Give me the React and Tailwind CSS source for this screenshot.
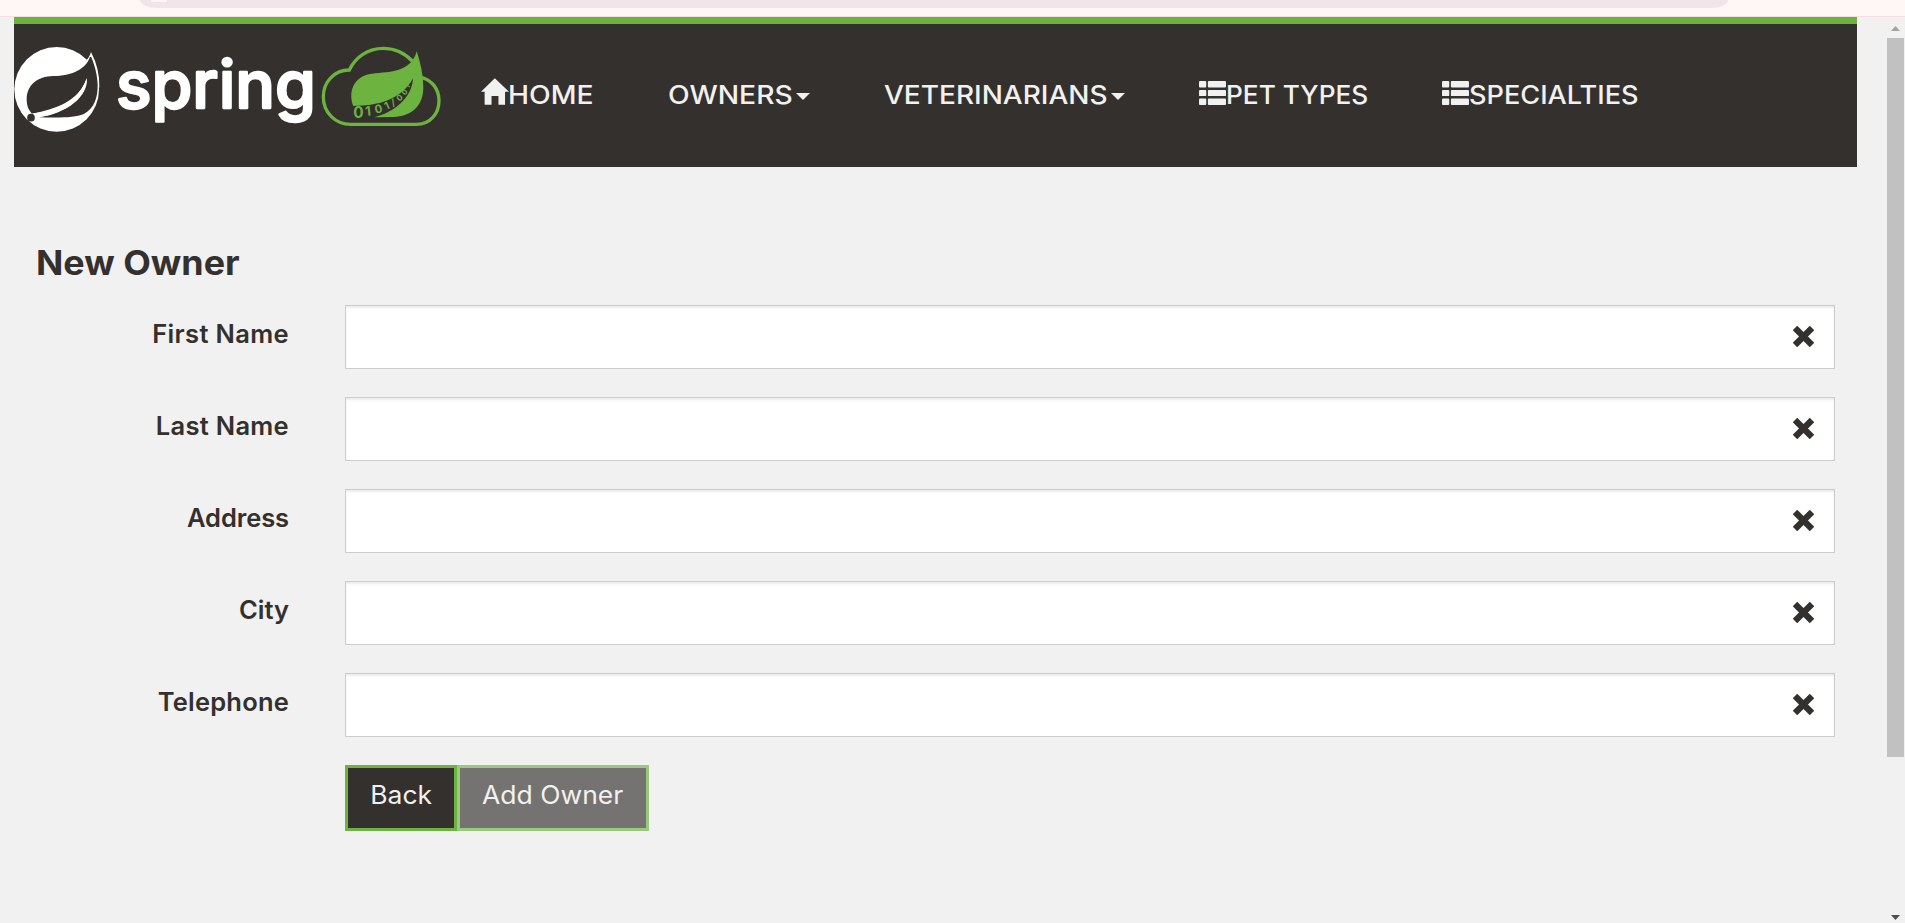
import React from "react";

function SpringLogo() {
  return (
    <svg viewBox="42 135 1290 264" className="h-[88px] w-[430px] shrink-0 overflow-visible" aria-label="Spring">
      <circle cx="170" cy="268" r="127" fill="#fff" />
      <path d="M250 190Q268 176 273 156Q300 208 298 262L270 290Z" fill="#fff" />
      <path
        d="M270 170C258 208 215 227 160 228C112 229 80 255 80 298C80 318 86 331 96 341C170 332 235 305 260 235C266 290 200 340 118 352C180 354 226 353 250 343C285 325 293 290 293 255C292 225 284 195 274 172Z"
        fill="#34302d"
      />
      <path d="M96 341C170 328 240 300 260 235C264 290 195 342 116 351Z" fill="#fff" />
      <circle cx="93" cy="353" r="11.5" fill="#34302d" />
      <text
        x="348"
        y="323"
        textLength="600"
        lengthAdjust="spacingAndGlyphs"
        fill="#fff"
        stroke="#fff"
        strokeWidth="7"
        strokeLinejoin="round"
        className="font-['Inter',sans-serif] text-[196px] font-medium"
      >
        spring
      </text>
      <path
        d="M1240 186C1216 160 1184 145 1150 145C1104 145 1066 171 1048 210C1003 210 970 246 970 290C970 337 1005 373 1052 373H1250C1290 373 1317 341 1317 302C1317 268 1297 241 1264 232"
        fill="none"
        stroke="#6db33f"
        strokeWidth="10"
      />
      <path
        d="M1250 154C1262 190 1270 225 1270 262C1270 320 1232 350 1180 351L1122 352C1180 338 1236 296 1239 235C1205 300 1130 318 1060 318C1046 282 1056 240 1098 225C1140 212 1230 230 1250 154Z"
        fill="#6db33f"
      />
      <g fill="#6db33f" className="font-['Inter',sans-serif] font-bold">
        <text x="1060" y="355" className="text-[46px]">0</text>
        <text transform="translate(1097 348) rotate(-6)" className="text-[39px]">1</text>
        <text transform="translate(1127 341) rotate(-14)" className="text-[34px]">0</text>
        <text transform="translate(1159 330) rotate(-24)" className="text-[31px]">1</text>
        <text transform="translate(1178 319) rotate(-24)" className="text-[28px]">/</text>
        <text transform="translate(1197 305) rotate(-36)" className="text-[25px]">0</text>
        <text transform="translate(1214 287) rotate(-46)" className="text-[22px]">0</text>
        <text transform="translate(1227 266) rotate(-58)" className="text-[19px]">1</text>
      </g>
    </svg>
  );
}

function HomeIcon() {
  return (
    <svg viewBox="64 84 85 81" className="mt-[-2px] h-[27px] w-[28px] shrink-0" fill="#f1f1f1">
      <path d="M106 84L149 125H137V165H117V138H96V165H75V125H64Z" />
    </svg>
  );
}

function ListIcon() {
  return (
    <svg viewBox="0 0 82 73" className="mt-px h-[24px] w-[27px] shrink-0" fill="#f1f1f1">
      <rect x="0" y="0" width="22" height="20" rx="3" />
      <rect x="27" y="0" width="55" height="20" rx="3" />
      <rect x="0" y="27" width="22" height="19" rx="3" />
      <rect x="27" y="27" width="55" height="19" rx="3" />
      <rect x="0" y="53" width="22" height="20" rx="3" />
      <rect x="27" y="53" width="55" height="20" rx="3" />
    </svg>
  );
}

function Caret() {
  return (
    <svg viewBox="0 0 14 7" className="mt-[13px] h-[7px] w-[14px] shrink-0" fill="#f1f1f1">
      <path d="M0 0H14L7 7Z" />
    </svg>
  );
}

function RemoveIcon() {
  return (
    <svg viewBox="0 0 63 63" className="mt-[-2px] h-[21px] w-[21px] shrink-0">
      <path d="M6 6L57 57M57 6L6 57" stroke="#34302d" strokeWidth="19" />
    </svg>
  );
}

const fields = [
  { name: "First Name", tracking: "tracking-[0.35px]" },
  { name: "Last Name", tracking: "tracking-[0.3px]" },
  { name: "Address", tracking: "tracking-[-0.1px]" },
  { name: "City", tracking: "tracking-[0px]" },
  { name: "Telephone", tracking: "tracking-[0.2px]" },
];

export default function App() {
  return (
    <div className="flex h-[923px] w-full flex-col overflow-hidden bg-[#f1f1f1] font-['Inter',sans-serif] text-[#34302d]">
      <div className="flex h-[17px] shrink-0 items-start border-b border-[#f5dfe2] bg-[#fff7f5] pl-[140px]">
        <div className="h-2 w-[1588px] rounded-[0_0_18px_18px/0_0_8px_8px] bg-[#f1e5e9] pl-[11px]">
          <div className="h-[2px] w-4 rounded-b-full bg-[#fff7f5]" />
        </div>
      </div>

      <div className="flex min-h-0 flex-1">
        <div className="w-[1887px] pl-[14px]">
          <header className="flex h-[150px] w-[1843px] border-t-[7px] border-[#6db33f] bg-[#34302d] pt-[21px]">
            <SpringLogo />
            <nav className="ml-[37px] mt-[35px] grid h-[30px] grid-cols-[187px_216px_315px_243px_1fr] whitespace-nowrap text-[25px] font-medium leading-[30px] text-[#f1f1f1]">
              <a className="flex">
                <HomeIcon />
                <span className="-ml-px origin-left scale-x-[1.13]">HOME</span>
              </a>
              <a className="flex">
                <span className="w-[128px] origin-left scale-x-[1.13]">OWNERS</span>
                <Caret />
              </a>
              <a className="flex">
                <span className="w-[227px] origin-left scale-x-[1.12]">VETERINARIANS</span>
                <Caret />
              </a>
              <a className="flex">
                <ListIcon />
                <span className="origin-left scale-x-[1.05]">PET TYPES</span>
              </a>
              <a className="flex">
                <ListIcon />
                <span className="origin-left scale-x-[1.085]">SPECIALTIES</span>
              </a>
            </nav>
          </header>

          <main className="pl-[22px] pt-[76px]">
            <h2 className="mb-[22px] w-[195px] origin-left scale-x-[1.055] whitespace-nowrap text-[34px] font-bold leading-10">
              New Owner
            </h2>
            <form className="flex flex-col gap-7">
              {fields.map((f) => (
                <div key={f.name} className="grid h-16 grid-cols-[253px_1490px] gap-x-14">
                  <label className={`pt-[11px] text-right text-[25.5px] font-semibold leading-9 ${f.tracking}`}>
                    {f.name}
                  </label>
                  <div className="flex items-center border border-[#ccc] bg-white pr-5 shadow-[inset_0_2px_2px_rgba(0,0,0,0.075)]">
                    <input type="text" className="min-w-0 flex-1 bg-transparent px-6 text-[26px] outline-none" />
                    <RemoveIcon />
                  </div>
                </div>
              ))}
              <div className="flex pl-[309px] text-[25px] leading-9 text-[#f1f1f1]">
                <button
                  type="button"
                  className="flex h-[66px] w-28 justify-center border-[3px] border-[#6db33f] bg-[#34302d] pt-[9px]"
                >
                  <span className="scale-x-[1.06]">Back</span>
                </button>
                <button
                  type="button"
                  className="flex h-[66px] w-48 justify-center border-[3px] border-[#6db33f] bg-[#34302d] pt-[9px] opacity-65"
                >
                  <span className="scale-x-[1.06]">Add Owner</span>
                </button>
              </div>
            </form>
          </main>
        </div>

        <div className="flex w-[17px] shrink-0 flex-col items-center bg-[#f1f1f1]">
          <svg viewBox="0 0 9 5" className="mb-[7px] mt-[9px] h-[5px] w-[9px]" fill="#a3a3a3">
            <path d="M4.5 0L9 5H0Z" />
          </svg>
          <div className="h-[719px] w-full bg-[#c1c1c1]" />
          <svg viewBox="0 0 9 5" className="mb-[3px] mt-auto h-[5px] w-[9px]" fill="#505050">
            <path d="M0 0H9L4.5 5Z" />
          </svg>
        </div>
      </div>
    </div>
  );
}
